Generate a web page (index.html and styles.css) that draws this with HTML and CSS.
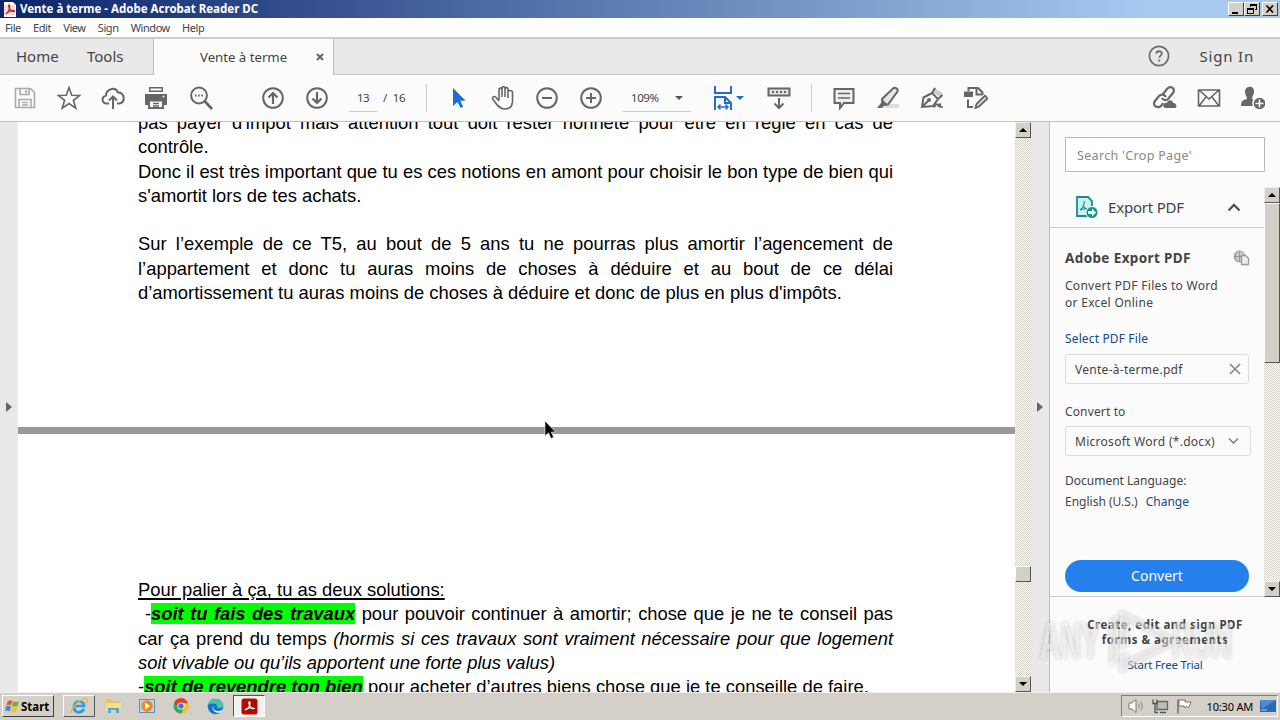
FILE: index.html
```html
<!DOCTYPE html>
<html lang="fr">
<head>
  <meta charset="UTF-8" />
  <meta name="viewport" content="width=device-width, initial-scale=1.0"/>
  <title>Vente à terme - Adobe Acrobat Reader DC</title>
  <link rel="stylesheet" href="styles.css">
</head>
<body>

  <div class="titlebar">
    <svg class="app-icon" viewBox="0 0 12 15"><path d="M0 0h9l3 3v12H0z" fill="#fff"/><path d="M0 3h11v10H0z" fill="#f4dcda"/><path d="M2 12c3-3 4-6 3.500-8.500C5 2 4 4 5.500 6.500S9 10 10.500 9C9 7.500 4 9 2 12z" fill="none" stroke="#c8201c" stroke-width="1.300"/></svg>
    <span class="title"><span>Vente à terme - Adobe Acrobat Reader DC</span></span>
    <div class="win-buttons">
      <button class="win-btn"><svg viewBox="0 0 14 12"><path d="M3 9h6v2H3z"/></svg></button>
      <button class="win-btn"><svg viewBox="0 0 14 12"><path d="M5 1h7v6h-2V6h1V3H6v1H5zM2 5h7v6H2zm1 2v3h5V7z" fill-rule="evenodd"/></svg></button>
      <button class="win-btn close"><svg viewBox="0 0 14 12"><path d="M3.500 2.500l6.500 7M10 2.500l-6.500 7" stroke="#000" stroke-width="1.700"/></svg></button>
    </div>
  </div>

  <div class="menubar">
    <span>File</span><span>Edit</span><span>View</span><span>Sign</span><span>Window</span><span>Help</span>
  </div>

  <div class="tabs">
    <div class="tab-left"><span class="home">Home</span><span class="tools">Tools</span></div>
    <div class="tab-active"><span>Vente à terme</span>
      <svg width="8" height="8" viewBox="0 0 8 8"><path d="M1 1l6 6M7 1L1 7" stroke="#666" stroke-width="2"/></svg>
    </div>
    <div class="tab-right">
      <svg width="22" height="22" viewBox="0 0 22 22"><circle cx="11" cy="11" r="9.600" fill="none" stroke="#6b6b6b" stroke-width="1.700"/><path d="M8.300 8.600c.2-3.200 5.600-3.100 5.500.1 0 1.900-2.500 2-2.500 4.100M11.300 14.600v2" fill="none" stroke="#6b6b6b" stroke-width="1.800"/></svg>
      <span class="sign-in">Sign In</span>
    </div>
  </div>

  <div class="toolbar">
    <div class="group first">
      <svg class="icon pale" viewBox="0 0 24 24"><path d="M2.500 2.500h15l4 4v15h-19zM7 2.500v6h9v-6M6 21.500v-8h12v8M13 4v3M9 16.500h6M9 19h6"/></svg>
      <svg class="icon" viewBox="0 0 24 24"><path d="M12 1.500l2.700 7.700 8.200.2-6.500 4.900 2.400 7.900-6.800-4.700-6.800 4.700 2.400-7.900L1.100 9.400l8.200-.2z"/></svg>
      <svg class="icon" viewBox="0 0 24 24"><path d="M8 17.500H6C1 17.500-.3 11 5 9.600 5 3.500 14-.3 17 6.500c6.500 0 8 9.500 1.500 11H16M12 23V11M8 14.500l4-4 4 4" stroke-width="2"/></svg>
      <svg class="icon" viewBox="0 0 24 24"><path d="M4 1h14v5H4zM0 8h22v11h-3v-5H3v5H0z" fill="#666" stroke="none"/><path d="M4 14.500h14v7.500H4z" fill="#fff" stroke-width="2"/><path d="M8 17.500h6M8 20h6" stroke-width="1.300"/><path d="M5.500 3.500h11" stroke="#fff" stroke-width="2"/><path d="M17.500 10.500h2" stroke="#fff" stroke-width="1.500"/></svg>
      <svg class="icon" viewBox="0 0 24 24"><circle cx="10" cy="9.500" r="7.900" stroke-width="2"/><path d="M15.500 15l7.500 8" stroke-width="2.800"/><path d="M6 9.500h1.600M9.200 9.500h1.600M12.400 9.500H14" stroke-width="2"/></svg>
    </div>
    <div class="group paging">
      <svg class="icon" viewBox="0 0 24 24"><circle cx="12" cy="12" r="9.800" stroke-width="2"/><path d="M12 18V7M7.500 11.500L12 7l4.500 4.500" stroke-width="2.200"/></svg>
      <svg class="icon" viewBox="0 0 24 24"><circle cx="12" cy="12" r="9.800" stroke-width="2"/><path d="M12 6v11M7.500 12.500L12 17l4.500-4.500" stroke-width="2.200"/></svg>
    </div>
    <span class="page-no">13</span><span class="page-total">/&nbsp; 16</span>
    <i class="sep"></i>
    <div class="group modes">
      <svg class="icon" viewBox="0 0 24 24"><path d="M6 2v18l4.500-4 3.200 6 2.500-1.200-3-6h5.500z" fill="#1f6dd0" stroke="none"/></svg>
      <svg class="icon" viewBox="0 0 24 24"><path d="M8 14V4c0-2.500 3-2.500 3 0v7V2.500c0-2.500 3-2.500 3 0V11 3.500c0-2.500 3-2.500 3 0V12 6c0-2 4.500-2 4.500.5V15c0 5-3 8-8 8-5.500 0-8-5-11.500-9.500C.5 10.500 4 9.500 5.500 12L8 15"/></svg>
      <svg class="icon" viewBox="0 0 24 24"><circle cx="12" cy="12" r="9.800" stroke-width="2"/><path d="M7 12h10" stroke-width="2"/></svg>
      <svg class="icon" viewBox="0 0 24 24"><circle cx="12" cy="12" r="9.800" stroke-width="2"/><path d="M7 12h10M12 7v10" stroke-width="2"/></svg>
    </div>
    <div class="zoom-box"><span>109%</span><i class="caret"></i></div>
    <div class="fit">
      <svg class="icon blue" viewBox="0 0 24 26"><path d="M4 1v7h16V1M4 25V12h10l6 6v7M14 12v6h6" stroke-width="2"/><path d="M7 22h10M9.500 19.500L7 22l2.500 2.500M14.500 19.500L17 22l-2.500 2.500" stroke-width="1.500"/></svg>
      <i class="caret blue-caret"></i>
    </div>
    <svg class="icon keys" viewBox="0 0 24 24"><path d="M1.500 2.500h21v7h-21z" fill="#e2e2e2" stroke-width="2"/><path d="M5 6h2M9 6h2M13 6h2M17 6h2" stroke-width="2"/><path d="M12 12v10M7.500 17.500L12 22l4.500-4.500" stroke-width="2"/></svg>
    <i class="sep"></i>
    <div class="group notes">
      <svg class="icon" viewBox="0 0 24 24"><path d="M2.500 3h19v14H12l-4 5v-5H2.500z" fill="#eee" stroke-width="2"/><path d="M6 7.500h12M6 12h12"/></svg>
      <svg class="icon" viewBox="0 0 24 24"><path d="M11 18h12v4H8z" fill="#ddd" stroke="none"/><path d="M6 13L17 2.500c2-1.500 5.500 0 4.500 3L12 18.500H7z" fill="#e5e5e5" stroke-width="2"/><path d="M6 13l6 6-4 1-2 2H1l4-5z" fill="#666" stroke="none"/></svg>
      <svg class="icon" viewBox="0 0 24 24"><path d="M15 1l2 3 6 3-3 4-8-5z" fill="#ccc" stroke="none"/><path d="M2 21l1.500-9.500L12 7l6 6-5 7zM2 21l6-6M12 7l3-5M18 13l4.500-4" stroke-width="2"/><circle cx="9" cy="14" r="1.300" fill="#666"/><path d="M14 21.500c3-5 4-4 4-1 2-4 3-3 2 .5h3" stroke-width="1.700"/></svg>
      <svg class="icon" viewBox="0 0 24 24"><path d="M0 5.500h9v5.500H0z" fill="#666" stroke="none"/><path d="M4.500 5V2H14l4.500 4.500V9M12.500 2v6.500h6M4 13.500V21h5" stroke-width="2"/><path d="M11.500 22l1-4L21 9.500l2.500 3-8.500 8z" fill="#ddd" stroke-width="1.800"/></svg>
    </div>
    <div class="group share">
      <svg class="icon" viewBox="0 0 24 24"><path d="M10 8l4-5c4-4 9 0 6 4l-5 6c-2 2-5 1-6-1M13 11c-2-3-5-3-7-1l-4 5c-3 4 2 8 6 5l2-3" stroke-width="2.200"/><path d="M10 20c0-3 3-4 4-3 1-4 6-3 6 0 3-1 5 5 2 5H12z" fill="#666" stroke="none"/></svg>
      <svg class="icon" viewBox="0 0 24 24"><path d="M1.500 4h21v16h-21zM2 4l10 9 10-9M2 20l7-9M22 20l-7-9"/></svg>
      <svg class="icon" viewBox="0 0 24 24"><path d="M4 6c0-7 10-7 9 0 0 3-2 4-2 7 2 1 5 1 4 7H0c0-5 2-6 6-7 0-3-2-4-2-7z" fill="#666" stroke="none"/><circle cx="18.500" cy="17.500" r="6.500" fill="#666" stroke="#fbfbfb" stroke-width="1.500"/><path d="M14.500 17.500h8M18.500 13.500v8" stroke="#fff" stroke-width="1.500"/></svg>
    </div>
  </div>

  <div class="main">
    <div class="rail"><i class="tri"></i></div>
    <div class="document">
      <div class="page page-one">
        <p class="full">pas payer d'impot mais attention tout doit rester honnête pour être en règle en cas de</p>
        <p>contrôle.</p>
        <p class="full">Donc il est très important que tu es ces notions en amont pour choisir le bon type de bien qui</p>
        <p>s'amortit lors de tes achats.</p>
        <p class="blank"></p>
        <p class="full">Sur l’exemple de ce T5, au bout de 5 ans tu ne pourras plus amortir l’agencement de</p>
        <p class="full">l’appartement et donc tu auras moins de choses à déduire et au bout de ce délai</p>
        <p>d’amortissement tu auras moins de choses à déduire et donc de plus en plus d'impôts.</p>
      </div>
      <div class="page page-two">
        <p><u>Pour palier à ça, tu as deux solutions:</u></p>
        <p class="full indent">-<mark>soit tu fais des travaux</mark> pour pouvoir continuer à amortir; chose que je ne te conseil pas</p>
        <p class="full">car ça prend du temps <em>(hormis si ces travaux sont vraiment nécessaire pour que logement</em></p>
        <p><em>soit vivable ou qu’ils apportent une forte plus valus)</em></p>
        <p>-<mark>soit de revendre ton bien</mark> pour acheter d’autres biens chose que je te conseille de faire.</p>
      </div>
      <svg class="cursor" width="12" height="20" viewBox="0 0 12 20"><path d="M1 1v15l3.500-3.300L7 18.500l2.700-1.200L7.200 12H11.500z" fill="#000" stroke="#eee" stroke-width=".6"/></svg>
    </div>
    <div class="scroll doc-scroll">
      <button class="arrow up"></button>
      <i class="thumb"></i>
      <button class="arrow down"></button>
    </div>
    <div class="rail right"><i class="tri"></i></div>

    <div class="sidebar">
      <div class="search">Search 'Crop Page'</div>
      <div class="panel">
        <div class="panel-body">
          <div class="export-head">
            <svg width="24" height="24" viewBox="0 0 24 24"><path d="M2 2h11l4 4v15H2z" fill="#cdf0f2" stroke="#13908d" stroke-width="1.800"/><path d="M5 15c3-2 5-6 4-9M8 10c1 3 3 4 5 4-3-1-5 0-8 1" fill="none" stroke="#13908d" stroke-width="1.100"/><circle cx="17" cy="17.500" r="6" fill="#13908d" stroke="#fafafa"/><path d="M13 16h4v-2.500l4 4-4 4V19h-4z" fill="#fff"/></svg>
            <span>Export PDF</span>
            <svg class="chev" width="14" height="9" viewBox="0 0 14 9"><path d="M1.500 7.500L7 2l5.500 5.500" fill="none" stroke="#505050" stroke-width="2.300"/></svg>
          </div>
          <div class="export-title"><b>Adobe Export PDF</b>
            <svg width="17" height="16" viewBox="0 0 17 16"><circle cx="6.500" cy="6.500" r="5.500" fill="#ccc" stroke="#999"/><path d="M1 6.500h11M6.500 1v11M4 1.500c-2 4-2 6 0 10" fill="none" stroke="#999"/><path d="M8.500 5.500h4l3 3v6h-7z" fill="#eee" stroke="#999" stroke-width="1.300"/></svg>
          </div>
          <div class="desc">Convert PDF Files to Word<br>or Excel Online</div>
          <a class="select">Select PDF File</a>
          <div class="field file"><span>Vente-à-terme.pdf</span><svg width="12" height="12" viewBox="0 0 12 12"><path d="M1 1l10 10M11 1L1 11" stroke="#888" stroke-width="1.700"/></svg></div>
          <div class="label">Convert to</div>
          <div class="field format"><span>Microsoft Word (*.docx)</span><svg width="11" height="8" viewBox="0 0 11 8"><path d="M1 1.500l4.500 4.500L10 1.500" fill="none" stroke="#888" stroke-width="1.700"/></svg></div>
          <div class="lang">Document Language:</div>
          <div class="lang-row"><span>English (U.S.)</span><a>Change</a></div>
          <button class="convert">Convert</button>
        </div>
        <div class="scroll side-scroll">
          <button class="arrow up"></button>
          <i class="thumb"></i>
          <button class="arrow down"></button>
        </div>
      </div>
      <div class="promo">
        <b>Create, edit and sign PDF</b>
        <b>forms &amp; agreements</b>
        <a>Start Free Trial</a>
      </div>
      <svg class="watermark" width="200" height="72" viewBox="0 0 200 72">
        <g fill="#fff" fill-opacity=".5">
          <text x="2" y="51" textLength="60" lengthAdjust="spacingAndGlyphs">ANY</text>
          <text x="134" y="51" textLength="60" lengthAdjust="spacingAndGlyphs">RUN</text>
          <path d="M72 13l8-5v45l-8 5z"/>
          <path d="M82 3l60 31-60 32V50l8-5v8l36-19-36-20v24l-8 4z"/>
        </g>
      </svg>
    </div>
  </div>

  <div class="taskbar">
    <button class="start">
      <svg width="15" height="15" viewBox="0 0 16 16"><path d="M3 2c2-1 3-1 5 0L6.500 7c-2-1-3-1-5 0z" fill="#e45a22"/><path d="M9 2.500c2 1 4 1 6 0L13.500 7.500c-2 1-4 1-6 0z" fill="#7dac35"/><path d="M1.200 8c2-1 3-1 5 0L5 13c-2-1-3-1-5 0z" fill="#3f86cf"/><path d="M7.200 8.500c2 1 4 1 6 0L12 13.500c-2 1-4 1-6 0z" fill="#f4c02b"/></svg>
      <span>Start</span></button>
    <div class="task raised"><svg width="18" height="18" viewBox="0 0 18 18"><path d="M14 12c-4 6-11 3-10-3S14 3 14 9H5" fill="none" stroke="#2c9be0" stroke-width="2.700"/><path d="M2 16C-1 12 13-1 17 2c1 1 0 3-1 4" fill="none" stroke="#e6b944" stroke-width="1.400"/></svg></div>
    <div class="task"><svg width="17" height="16" viewBox="0 0 17 16"><path d="M1 1h6l1 2h7v10H1z" fill="#e6c568"/><path d="M1 5h15v8H1z" fill="#f6e08f"/><path d="M3 15v-5h11v5h-3v-3H6v3z" fill="#54a9da"/></svg></div>
    <div class="task"><svg width="16" height="16" viewBox="0 0 16 16"><path d="M.5 1.500h15v13H.5z" fill="#b9d5ef" stroke="#5a8fc6"/><circle cx="8" cy="8" r="5.800" fill="#ef8b1c"/><path d="M6 4.500l5 3.500-5 3.500z" fill="#fff"/></svg></div>
    <div class="task"><svg width="16" height="16" viewBox="0 0 16 16"><circle cx="8" cy="8" r="7.500" fill="#33a853"/><path d="M1.200 4.500A7.600 7.600 0 0 1 15 5H8l-3 4z" fill="#e33b2e"/><path d="M15 5a7.600 7.600 0 0 1-7 10.500L11.500 9 10 5z" fill="#fcc31e"/><circle cx="8" cy="8" r="3.600" fill="#fff"/><circle cx="8" cy="8" r="2.700" fill="#3c78dc"/></svg></div>
    <div class="task"><svg width="17" height="17" viewBox="0 0 17 17"><circle cx="8.500" cy="8.500" r="7.800" fill="#1475c8"/><path d="M1 7C2-1 15-1 16 7c0 4-5 4-6 2 1-3-4-5-9-2z" fill="#43c4ad"/><path d="M7 7c-2 3 0 6 4 6 2 0 4-.5 5-2-1 3-3 4-5 4-5-1-7-5-4-8z" fill="#e4eef4"/></svg></div>
    <div class="task current"><svg width="17" height="17" viewBox="0 0 17 17"><rect x=".5" y=".5" width="16" height="16" rx="2.500" fill="#b30b00"/><path d="M4 12c3-1 5-4 5-7 0-2-2-1-1 1 1 3 3 5 5 4.500C11 9 6 10 4 12z" fill="none" stroke="#fff" stroke-width="1.200"/></svg></div>
    <div class="tray">
      <svg width="17" height="16" viewBox="0 0 17 16"><path d="M1 5h3l4-3.500v13L4 11H1z" fill="#fff" stroke="#777"/><path d="M10.500 5.500q2 2.500 0 5M12.500 3.500q3.500 4.500 0 9" fill="none" stroke="#888"/></svg>
      <svg width="17" height="16" viewBox="0 0 17 16"><path d="M5 3.500h10.500v8H5z" fill="#bbb" stroke="#666" stroke-width="1.300"/><path d="M1 1.500v4h4v-4M3 5v9.500h3M8 14.500h6" fill="none" stroke="#555" stroke-width="1.300"/></svg>
      <svg width="17" height="16" viewBox="0 0 17 16"><path d="M2 1.500v14" stroke="#777" stroke-width="1.700"/><path d="M3 2h6v2h6l-2 5H8V8H3z" fill="#fff" stroke="#777"/></svg>
      <span class="clock">10:30 AM</span>
      <svg width="16" height="12" viewBox="0 0 16 12"><path d="M0 0h16v12H0z" fill="#2d67b5"/><path d="M0 0h16L2 9z" fill="#4d8bd3"/><path d="M1 10h6" stroke="#a9d7f4"/></svg>
    </div>
  </div>

</body>
</html>
```
FILE: styles.css
```css
:root {
  --chrome: #d4d0c8;
  --grey: #e9e9e9;
  --panel: #fbfbfb;
  --ink: #444;
  --icon: #666;
  --link: #0f4a8a;
}

* {
  box-sizing: border-box;
}

body {
  margin: 0;
  width: 1280px;
  height: 720px;
  overflow: hidden;
  display: flex;
  flex-direction: column;
  font-family: "Noto Sans", sans-serif;
  font-size: 12px;
  color: var(--ink);
  background: #fff;
}

button {
  font-family: inherit;
  padding: 0;
}

svg {
  flex: none;
  display: block;
}

/* window chrome */
.titlebar {
  height: 18px;
  flex: none;
  display: flex;
  align-items: center;
  padding: 0 2px 0 4px;
  background: linear-gradient(90deg, #0a246a, #a6caf0 90%);
}

.app-icon {
  width: 12px;
  height: 15px;
}

.title {
  flex: 1;
  margin-left: 4px;
  color: #fff;
  font-size: 11.5px;
  font-weight: bold;
  line-height: 18px;
}

.win-buttons {
  display: flex;
}

.win-btn {
  width: 16px;
  height: 14px;
  border: 1px solid;
  border-color: #fff #404040 #404040 #fff;
  background: var(--chrome);
}

.win-btn.close {
  margin-left: 2px;
}

.menubar {
  height: 19px;
  flex: none;
  display: flex;
  gap: 12.3px;
  padding-left: 5px;
  background: #fdfdfd;
  font-size: 11px;
  letter-spacing: -0.45px;
  line-height: 20px;
}

.tabs {
  height: 38px;
  flex: none;
  display: flex;
  border-top: 2px solid #ccc;
  background: var(--grey);
  font-size: 15px;
  line-height: 35px;
}

.tab-left {
  width: 154px;
  display: flex;
  padding-left: 16px;
  border-right: 1px solid #bbb;
  border-bottom: 1px solid #c6c6c6;
}

.home {
  width: 71px;
}

.tab-active {
  width: 180px;
  display: flex;
  align-items: center;
  justify-content: space-between;
  padding: 0 9px 0 46px;
  background: var(--panel);
  border-right: 1px solid #bbb;
  font-size: 13.2px;
}

.tab-right {
  flex: 1;
  display: flex;
  align-items: center;
  justify-content: flex-end;
  gap: 30px;
  padding-right: 26px;
  border-bottom: 1px solid #c6c6c6;
}

.tab-right svg {
  margin-bottom: 2px;
}

.sign-in {
  letter-spacing: 0.8px;
}

/* toolbar */
.toolbar {
  height: 47px;
  flex: none;
  display: flex;
  align-items: center;
  padding-left: 13px;
  background: var(--panel);
  border-bottom: 1px solid #c0c0c0;
}

.icon {
  width: 24px;
  height: 24px;
  fill: none;
  stroke: var(--icon);
  stroke-width: 1.6;
}

.icon.pale {
  stroke: #aaa;
}

.icon.blue {
  stroke: #1f6dd0;
  height: 26px;
}

.group {
  display: flex;
  gap: 20px;
}

.paging {
  margin-left: 48px;
}

.page-no {
  width: 28px;
  height: 28px;
  margin-left: 20px;
  border-bottom: 1px solid #ccc;
  font-size: 11.5px;
  letter-spacing: -0.7px;
  line-height: 28px;
  text-align: center;
}

.page-total {
  width: 49px;
  height: 28px;
  padding-left: 6px;
  font-size: 11.5px;
  letter-spacing: -0.2px;
  line-height: 28px;
}

.sep {
  width: 1px;
  height: 28px;
  background: #ccc;
}

.modes {
  margin-left: 20px;
}

.zoom-box {
  width: 68px;
  height: 28px;
  margin-left: 20px;
  padding: 0 8px;
  display: flex;
  align-items: center;
  justify-content: space-between;
  border-bottom: 1px solid #ccc;
  font-size: 11.5px;
  letter-spacing: -0.4px;
}

.caret {
  border: 4px solid transparent;
  border-top: 4px solid #555;
  border-bottom: 0;
}

.blue-caret {
  border-top-color: #1f6dd0;
}

.fit {
  display: flex;
  align-items: center;
  gap: 1px;
  margin-left: 20px;
}

.keys {
  margin: 0 20px 0 23px;
}

.notes {
  margin-left: 20px;
}

.share {
  margin-left: auto;
  padding-right: 15px;
}

/* document */
.main {
  flex: 1;
  min-height: 0;
  display: flex;
}

.rail {
  width: 18px;
  flex: none;
  display: flex;
  align-items: center;
  justify-content: center;
  background: var(--grey);
}

.tri {
  border: 5px solid transparent;
  border-left: 6px solid #666;
  border-right: 0;
}

.document {
  width: 997px;
  flex: none;
  position: relative;
  overflow: hidden;
  display: flex;
  flex-direction: column;
  gap: 7px;
  background: #999;
  font-family: "Liberation Sans", Arial, sans-serif;
  font-size: 18.4px;
  line-height: 24.3px;
  color: #000;
}

.page {
  flex: none;
  padding: 0 122px 0 120px;
  background: #fff;
}

.page-one {
  height: 305px;
}

.page-one p:first-child {
  margin-top: -11px;
}

.page-two {
  height: 420px;
  padding-top: 144px;
}

.page p {
  margin: 0;
  height: 24.3px;
  white-space: nowrap;
}

.page p.full {
  text-align: justify;
  text-align-last: justify;
  white-space: normal;
}

/* this line only fits its measure slightly tightened */
.page p.indent {
  padding-left: 7px;
  letter-spacing: -0.05px;
}

mark {
  background: #0f0;
  color: inherit;
  font-weight: bold;
  font-style: italic;
}

u {
  text-decoration-thickness: 2px;
  text-underline-offset: 2px;
}

.cursor {
  position: absolute;
  left: 526px;
  top: 298px;
}

/* classic scrollbars */
.scroll {
  width: 16px;
  flex: none;
  display: flex;
  flex-direction: column;
  background: repeating-conic-gradient(#d4d0c8 0 25%, #fff 0 50%) 0 0 / 2px 2px;
}

.arrow {
  height: 16px;
  flex: none;
  display: flex;
  align-items: center;
  justify-content: center;
  border: 1px solid;
  border-color: #eee #555 #555 #eee;
  background: var(--chrome);
}

.arrow::before {
  content: '';
  border: 4px solid transparent;
}

.arrow.up::before {
  border-top: 0;
  border-bottom-color: #000;
}

.arrow.down::before {
  border-bottom: 0;
  border-top-color: #000;
}

.arrow.down {
  margin-top: auto;
}

.thumb {
  flex: none;
  border: 1px solid;
  border-color: #fff #555 #555 #fff;
  background: var(--chrome);
}

.doc-scroll .thumb {
  height: 16px;
  margin-top: 428px;
}

/* tools pane */
.sidebar {
  flex: 1;
  position: relative;
  display: flex;
  flex-direction: column;
  background: var(--panel);
  border-left: 1px solid #bbb;
}

.search {
  width: 200px;
  height: 35px;
  flex: none;
  margin: 15px 0 15px 15px;
  padding-left: 11px;
  border: 1px solid #bbb;
  background: #fff;
  color: #888;
  font-size: 12.5px;
  letter-spacing: 0.33px;
  line-height: 35px;
}

.panel {
  height: 410px;
  flex: none;
  display: flex;
}

.panel-body {
  flex: 1;
  padding-left: 15px;
  border-bottom: 1px solid #ccc;
}

.export-head {
  height: 41px;
  margin-left: -15px;
  padding: 0 23px 0 25px;
  display: flex;
  align-items: center;
  gap: 9px;
  border-bottom: 1px solid #ccc;
  font-size: 15px;
  letter-spacing: -0.2px;
}

.chev {
  margin-left: auto;
}

.export-title {
  display: flex;
  justify-content: space-between;
  align-items: center;
  height: 20px;
  margin: 20px 14px 0 0;
  font-size: 13.5px;
  letter-spacing: 0.38px;
}

.desc {
  margin-top: 9px;
  line-height: 17px;
  letter-spacing: 0.28px;
}

.select {
  display: block;
  margin-top: 19px;
  line-height: 17px;
  letter-spacing: 0.14px;
  color: var(--link);
}

.field {
  height: 30px;
  display: flex;
  align-items: center;
  justify-content: space-between;
  padding: 0 7px 0 9px;
  border: 1px solid #ddd;
  border-radius: 3px;
  letter-spacing: 0.28px;
}

.file {
  width: 184px;
  margin-top: 7px;
}

.label {
  margin-top: 19px;
  line-height: 17px;
  letter-spacing: 0.14px;
}

.format {
  width: 186px;
  margin-top: 6px;
  padding-right: 11px;
}

.lang {
  margin-top: 16px;
  line-height: 17px;
}

.lang-row {
  display: flex;
  gap: 8px;
  margin-top: 4px;
  line-height: 17px;
}

.lang-row a {
  color: var(--link);
}

.convert {
  width: 184px;
  height: 32px;
  display: block;
  margin-top: 50px;
  padding-bottom: 2px;
  border: 0;
  border-radius: 16px;
  background: #2680eb;
  color: #fff;
  font-size: 14px;
}

.side-scroll .thumb {
  height: 160px;
}

.promo {
  display: flex;
  flex-direction: column;
  align-items: center;
  padding: 20px 0 0;
  line-height: 15px;
  font-size: 11.5px;
}

.promo b {
  letter-spacing: 0.5px;
}

.promo a {
  margin-top: 10px;
  letter-spacing: -0.2px;
  color: var(--link);
}

.watermark {
  position: absolute;
  left: -12px;
  top: 485px;
  font-family: "Liberation Sans", Arial, sans-serif;
  font-size: 50px;
  font-weight: bold;
  filter: drop-shadow(0 0 2px rgba(0, 0, 0, .4));
}

/* taskbar */
.taskbar {
  height: 28px;
  flex: none;
  display: flex;
  align-items: center;
  padding: 0 2px 1px;
  border-top: 1px solid #eee;
  background: var(--chrome);
}

.start {
  width: 52px;
  height: 22px;
  display: flex;
  align-items: center;
  gap: 1px;
  padding-left: 2px;
  margin-right: 9px;
  border: 1px solid;
  border-color: #fff #404040 #404040 #fff;
  background: var(--chrome);
  color: #000;
  font-size: 11.5px;
  font-weight: bold;
}

.task {
  width: 32px;
  height: 22px;
  margin-right: 2px;
  display: flex;
  align-items: center;
  justify-content: center;
  border: 1px solid transparent;
}

.raised {
  border-color: #fff #555 #555 #fff;
}

.current {
  border-color: #555 #fff #fff #555;
  background: #f4f2ef;
}

.tray {
  width: 157px;
  height: 22px;
  margin-left: auto;
  display: flex;
  align-items: center;
  gap: 7px;
  padding: 0 1px 0 6px;
  border: 1px solid;
  border-color: #808080 #fff #fff #808080;
  color: #000;
  font-size: 11px;
}

.clock {
  margin-left: auto;
  letter-spacing: -0.2px;
}
```
